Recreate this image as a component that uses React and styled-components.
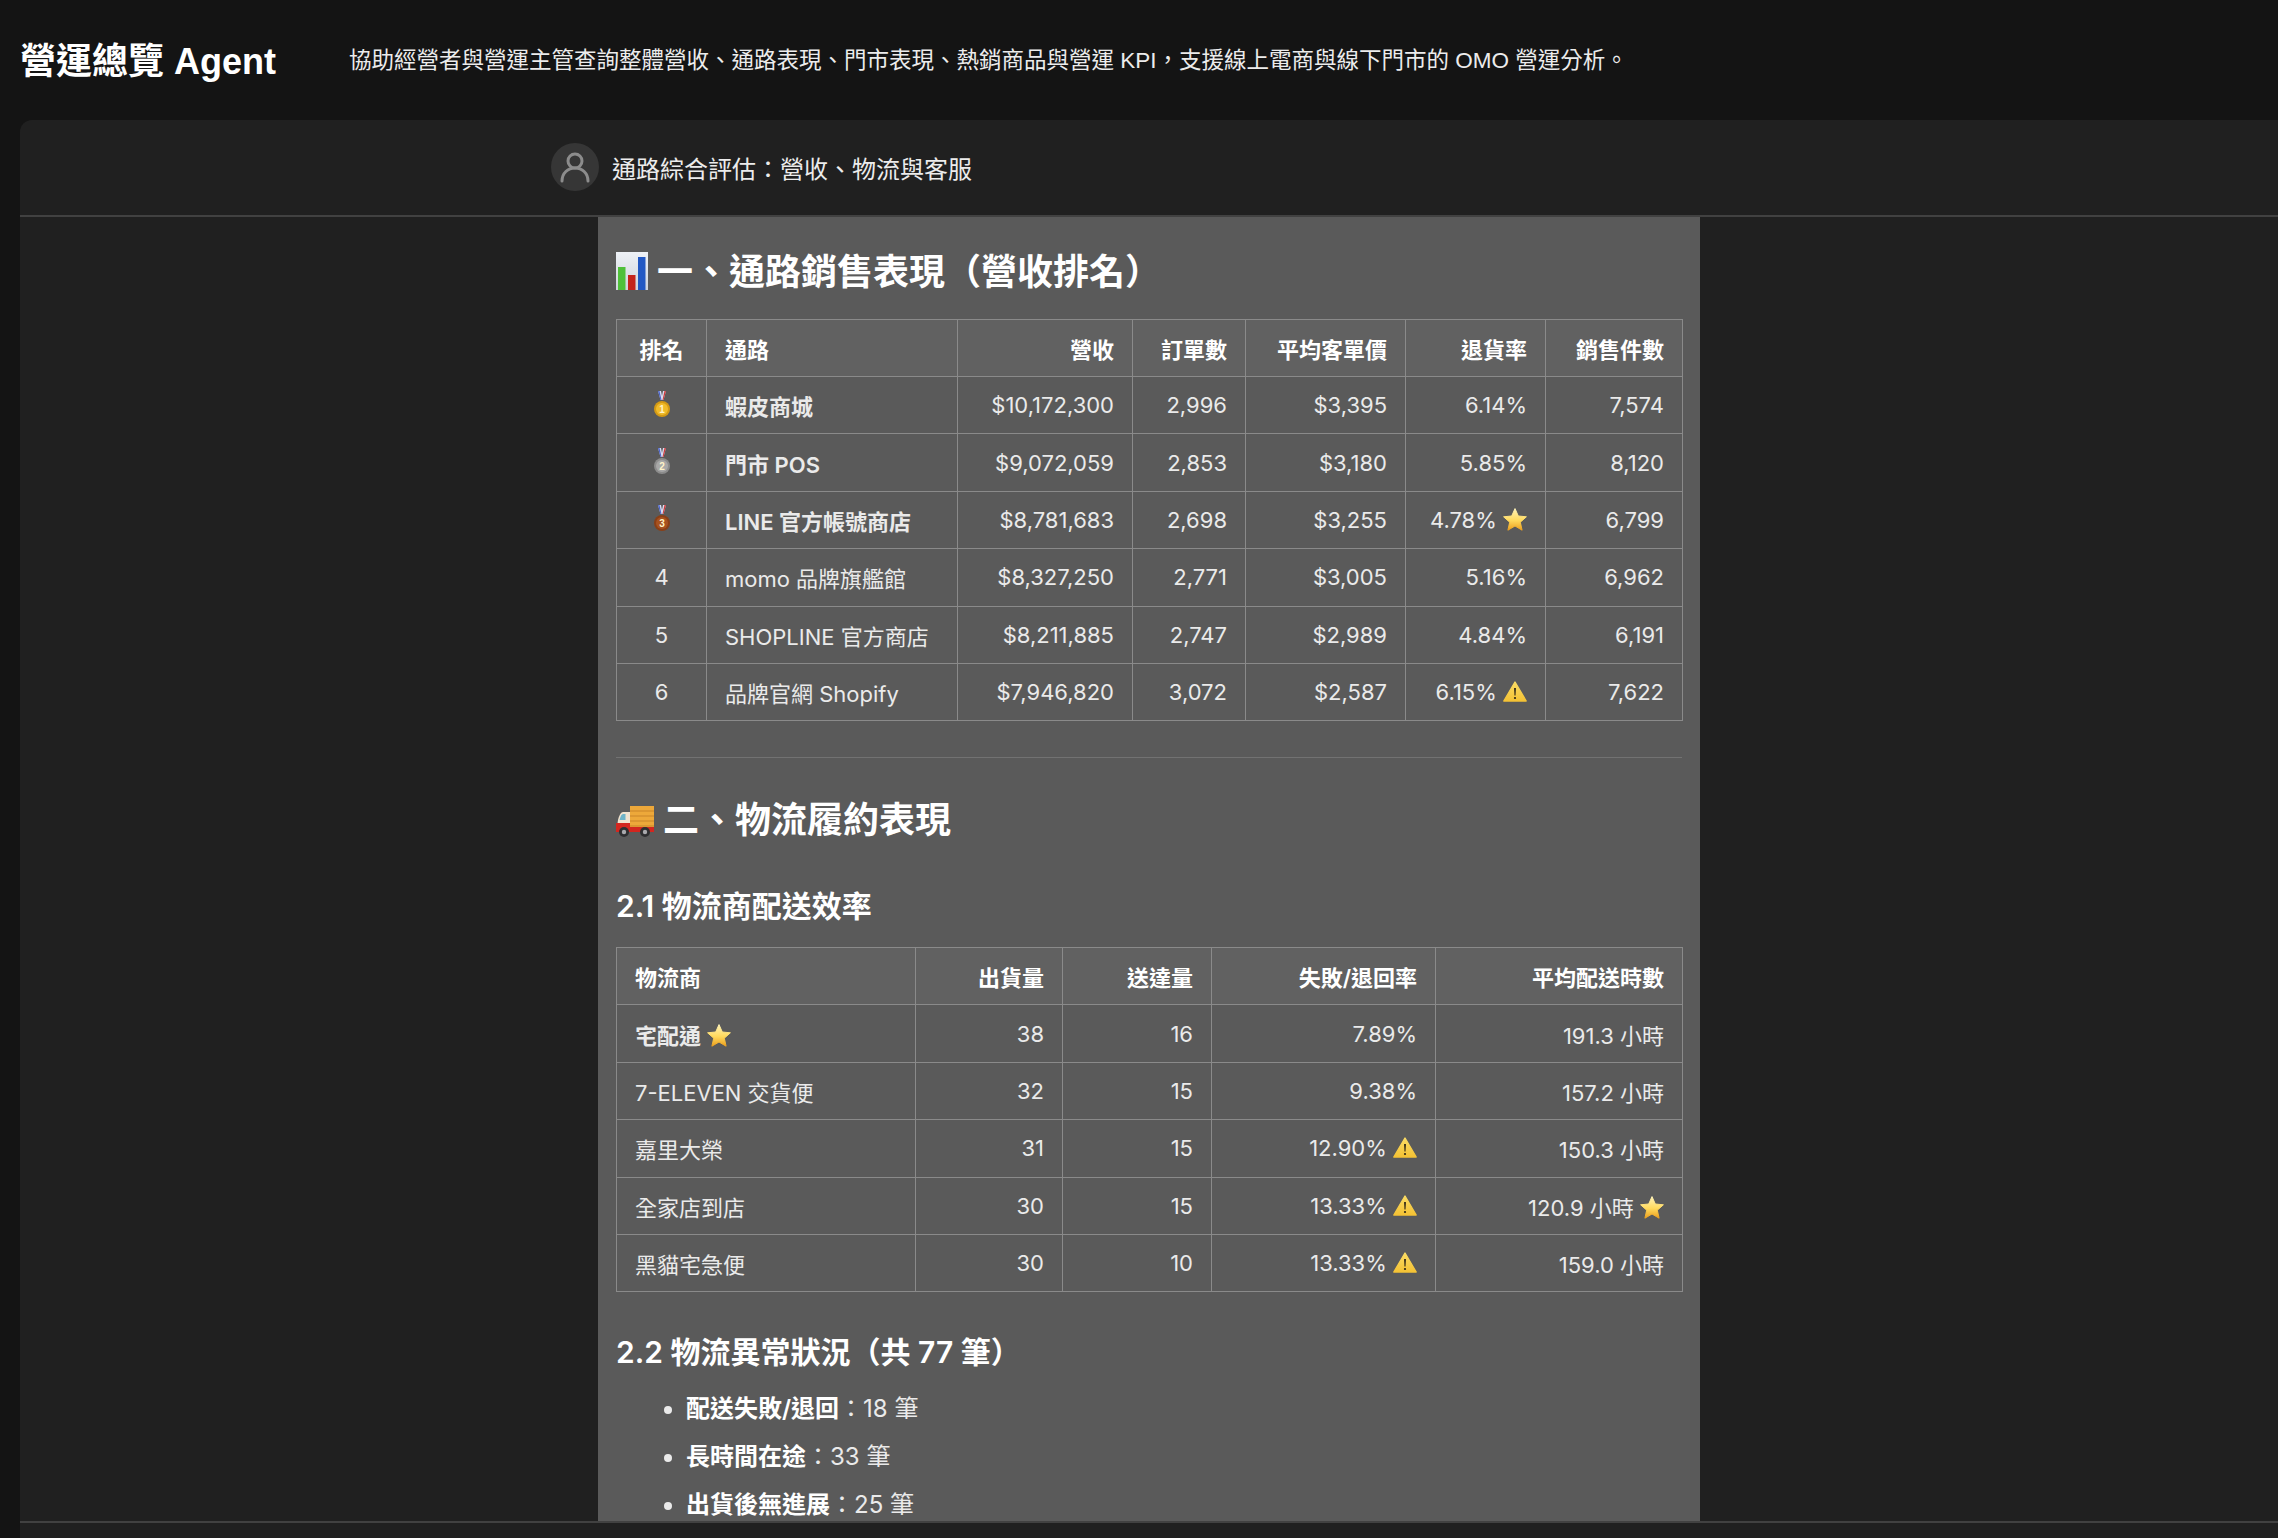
import React from 'react';
import styled, { createGlobalStyle } from 'styled-components';

const GlobalStyle = createGlobalStyle`
  html, body { margin: 0; padding: 0; background: #141414; }
  body {
    font-family: Inter, "Noto Sans CJK TC", sans-serif;
    color: #fff;
  }
`;

// --- emoji drawings (no colour emoji font in the sandbox) ---

const ChartIcon = () => (
  <EmojiSvg $w={32} $h={38} $mr={9} $shift={-5} viewBox="0 0 32 38">
    <defs>
      <linearGradient id="chartBg" x1="0" y1="0" x2="0" y2="1">
        <stop offset="0" stopColor="#eef1f6" />
        <stop offset="1" stopColor="#cfd4dc" />
      </linearGradient>
    </defs>
    <rect x="0" y="0" width="32" height="38" fill="url(#chartBg)" />
    <rect x="2" y="15" width="7.5" height="23" fill="#4fc03a" />
    <rect x="12" y="23" width="7.5" height="15" fill="#c5241c" />
    <rect x="22" y="5" width="7.5" height="33" fill="#2258c4" />
  </EmojiSvg>
);

const TruckIcon = () => (
  <EmojiSvg $w={38} $h={31} $mr={9} $shift={-4} viewBox="0 0 38 31">
    <rect x="14" y="0" width="24" height="23" fill="#eda83a" />
    <path d="M14 5h24M14 10h24M14 15h24M14 20h24" stroke="#c98428" strokeWidth="1" />
    <path d="M2 14 Q4 6 7 6 H14 V21 H1 Z" fill="#f1e3cf" />
    <path d="M3.5 14 Q5 8 7 8 H9.5 V14 Z" fill="#6fb4c8" />
    <path d="M0 17 H14 V21 H38 V26 H0 Z" fill="#d3261f" />
    <circle cx="8" cy="26" r="5" fill="#2e2e30" />
    <circle cx="8" cy="26" r="2.2" fill="#a9a9ad" />
    <circle cx="29" cy="26" r="5" fill="#2e2e30" />
    <circle cx="29" cy="26" r="2.2" fill="#a9a9ad" />
  </EmojiSvg>
);

const Medal = ({ face, edge, label }) => (
  <EmojiSvg $w={16} $h={26} viewBox="0 0 16 26">
    <path d="M4 0 H7 L8 5 L9 0 H12 L9.5 9 H6.5 Z" fill="#d8dcf0" />
    <path d="M4 0 H5.5 L7.5 9 H6.5 Z" fill="#4a63c8" />
    <path d="M10.5 0 H12 L9.5 9 H8.5 Z" fill="#cf3a3a" />
    <circle cx="8" cy="18" r="8" fill={edge} />
    <circle cx="8" cy="18" r="6" fill={face} />
    <MedalLabel x="8" y="21.5" textAnchor="middle">{label}</MedalLabel>
  </EmojiSvg>
);

const StarIcon = () => (
  <EmojiSvg $w={24} $h={23} $shift={-3} viewBox="0 0 24 23">
    <defs>
      <linearGradient id="starFill" x1="0" y1="0" x2="0" y2="1">
        <stop offset="0" stopColor="#fff3b8" />
        <stop offset="0.55" stopColor="#ffd95c" />
        <stop offset="1" stopColor="#eb9f1e" />
      </linearGradient>
    </defs>
    <path
      d="M12 .6 15.3 8l8.1.8-6.1 5.4 1.8 8-7.1-4.2-7.1 4.2 1.8-8L.6 8.8 8.7 8Z"
      fill="url(#starFill)"
      stroke="url(#starFill)"
      strokeLinejoin="round"
    />
  </EmojiSvg>
);

const WarnIcon = () => (
  <EmojiSvg $w={24} $h={21} $shift={-2} viewBox="0 0 24 21">
    <defs>
      <linearGradient id="warnFill" x1="0" y1="0" x2="0" y2="1">
        <stop offset="0" stopColor="#fbdc64" />
        <stop offset="1" stopColor="#f4c234" />
      </linearGradient>
    </defs>
    <path d="M12 1 23.2 20H.8Z" fill="url(#warnFill)" stroke="url(#warnFill)" strokeWidth="1.4" strokeLinejoin="round" />
    <path d="M11.1 7h1.8l-.4 7.6h-1Z" fill="#2b2314" />
    <circle cx="12" cy="17" r="1.1" fill="#2b2314" />
  </EmojiSvg>
);

// --- data ---

const gold = <Medal face="#f0bb2a" edge="#d49a14" label="1" />;
const silver = <Medal face="#a8a8a8" edge="#8c8c8c" label="2" />;
const bronze = <Medal face="#a8521f" edge="#8a3f16" label="3" />;

const channelCols = [90, 251, 175, 113, 160, 140, 137];
const channelHead = ['排名', '通路', '營收', '訂單數', '平均客單價', '退貨率', '銷售件數'];
const channels = [
  [gold, '蝦皮商城', '$10,172,300', '2,996', '$3,395', '6.14%', '7,574'],
  [silver, '門市 POS', '$9,072,059', '2,853', '$3,180', '5.85%', '8,120'],
  [bronze, 'LINE 官方帳號商店', '$8,781,683', '2,698', '$3,255', <>4.78% <StarIcon /></>, '6,799'],
  ['4', 'momo 品牌旗艦館', '$8,327,250', '2,771', '$3,005', '5.16%', '6,962'],
  ['5', 'SHOPLINE 官方商店', '$8,211,885', '2,747', '$2,989', '4.84%', '6,191'],
  ['6', '品牌官網 Shopify', '$7,946,820', '3,072', '$2,587', <>6.15% <WarnIcon /></>, '7,622'],
];

const carrierCols = [299, 147, 149, 224, 247];
const carrierHead = ['物流商', '出貨量', '送達量', '失敗/退回率', '平均配送時數'];
const carriers = [
  [<strong key="a">宅配通 <StarIcon /></strong>, '38', '16', '7.89%', '191.3 小時'],
  ['7-ELEVEN 交貨便', '32', '15', '9.38%', '157.2 小時'],
  ['嘉里大榮', '31', '15', <>12.90% <WarnIcon /></>, '150.3 小時'],
  ['全家店到店', '30', '15', <>13.33% <WarnIcon /></>, <>120.9 小時 <StarIcon /></>],
  ['黑貓宅急便', '30', '10', <>13.33% <WarnIcon /></>, '159.0 小時'],
];

const issues = [
  ['配送失敗/退回', '18 筆'],
  ['長時間在途', '33 筆'],
  ['出貨後無進展', '25 筆'],
];

const App = () => (
  <Page>
    <GlobalStyle />
    <Header>
      <Title>營運總覽 Agent</Title>
      <Description>
        協助經營者與營運主管查詢整體營收、通路表現、門市表現、熱銷商品與營運 KPI，支援線上電商與線下門市的 OMO 營運分析。
      </Description>
    </Header>
    <Panel>
      <UserBar>
        <Avatar>
          <svg width="34" height="34" viewBox="0 0 34 34" fill="none" stroke="#8c8c8c" strokeWidth="3">
            <circle cx="17" cy="11" r="7" />
            <path d="M4 31c0-8 6-13 13-13s13 5 13 13" strokeLinecap="round" />
          </svg>
        </Avatar>
        <UserText>通路綜合評估：營收、物流與客服</UserText>
      </UserBar>
      <ChatArea>
        <Message>
          <SectionTitle><ChartIcon />一、通路銷售表現（營收排名）</SectionTitle>
          <ReportTable>
            <colgroup>
              {channelCols.map((w, i) => <col key={i} width={w} />)}
            </colgroup>
            <thead>
              <tr>
                {channelHead.map((h, i) => (
                  <HeadCell key={h} $align={i === 0 ? 'center' : i === 1 ? 'left' : 'right'}>{h}</HeadCell>
                ))}
              </tr>
            </thead>
            <tbody>
              {channels.map((row, r) => (
                <tr key={r}>
                  {row.map((c, i) => (
                    <Cell key={i} $bold={i === 1 && r < 3} $align={i === 0 ? 'center' : i === 1 ? 'left' : 'right'}>{c}</Cell>
                  ))}
                </tr>
              ))}
            </tbody>
          </ReportTable>
          <Divider />
          <SectionTitle $tight><TruckIcon />二、物流履約表現</SectionTitle>
          <SubTitle>2.1 物流商配送效率</SubTitle>
          <ReportTable>
            <colgroup>
              {carrierCols.map((w, i) => <col key={i} width={w} />)}
            </colgroup>
            <thead>
              <tr>
                {carrierHead.map((h, i) => (
                  <HeadCell key={h} $align={i === 0 ? 'left' : 'right'}>{h}</HeadCell>
                ))}
              </tr>
            </thead>
            <tbody>
              {carriers.map((row, r) => (
                <tr key={r}>
                  {row.map((c, i) => (
                    <Cell key={i} $align={i === 0 ? 'left' : 'right'}>{c}</Cell>
                  ))}
                </tr>
              ))}
            </tbody>
          </ReportTable>
          <SubTitle $after>2.2 物流異常狀況（共 77 筆）</SubTitle>
          <IssueList>
            {issues.map(([name, count]) => (
              <li key={name}><strong>{name}</strong>：{count}</li>
            ))}
          </IssueList>
        </Message>
      </ChatArea>
      <PanelFooter />
    </Panel>
  </Page>
);

// --- STYLES ---

const Page = styled.div`
  width: 2278px;
  height: 1538px;
  display: flex;
  flex-direction: column;
  overflow: hidden;
  background: #141414;
`;

const Header = styled.header`
  flex: 0 0 120px;
  display: flex;
  align-items: center;
  padding: 0 0 4px 20px;
  box-sizing: border-box;
`;

const Title = styled.h1`
  margin: 0;
  width: 329px;
  font-size: 36px;
  font-weight: 600;
  font-family: "Liberation Sans", "Noto Sans CJK TC", sans-serif;
  color: #fff;
`;

const Description = styled.p`
  margin: 0;
  font-size: 22.5px;
  color: #ececec;
  font-family: "Liberation Sans", "Noto Sans CJK TC", sans-serif;
`;

const Panel = styled.main`
  flex: 1;
  min-height: 0;
  margin-left: 20px;
  display: flex;
  flex-direction: column;
  background: #202020;
  border-top-left-radius: 12px;
`;

const UserBar = styled.div`
  flex: 0 0 97px;
  box-sizing: border-box;
  display: flex;
  align-items: center;
  gap: 13px;
  padding: 0 0 1px 531px;
  border-bottom: 2px solid #414141;
`;

const Avatar = styled.div`
  width: 48px;
  height: 48px;
  border-radius: 50%;
  background: #363636;
  display: flex;
  align-items: center;
  justify-content: center;
`;

const UserText = styled.div`
  font-size: 24px;
  color: #ececec;
  font-family: "Liberation Sans", "Noto Sans CJK TC", sans-serif;
`;

const ChatArea = styled.div`
  flex: 1;
  min-height: 0;
  overflow: hidden;
  padding-left: 578px;
`;

const Message = styled.article`
  width: 1102px;
  min-height: 100%;
  box-sizing: border-box;
  padding: 30px 18px 0;
  background: #5a5a5a;
`;

const SectionTitle = styled.h2`
  margin: ${(p) => (p.$tight ? '0 0 40px' : '0 0 22px')};
  font-size: 36px;
  line-height: 50px;
  font-weight: 600;
  color: #fff;
`;

const SubTitle = styled.h3`
  margin: ${(p) => (p.$after ? '39px 0 12px' : '0 0 20px')};
  font-size: 30px;
  line-height: 42px;
  font-weight: 600;
  color: #fff;
`;

const ReportTable = styled.table`
  width: 100%;
  table-layout: fixed;
  border-collapse: collapse;
  font-size: 22px;
`;

const HeadCell = styled.th`
  height: 57px;
  padding: 0 18px;
  box-sizing: border-box;
  border: 1px solid #8a8a8a;
  background: #616161;
  color: #fff;
  font-weight: 600;
  text-align: ${(p) => p.$align};
`;

const Cell = styled.td`
  height: 57.4px;
  padding: 0 18px;
  box-sizing: border-box;
  border: 1px solid #8a8a8a;
  color: #eaeaea;
  font-weight: ${(p) => (p.$bold ? 600 : 400)};
  text-align: ${(p) => p.$align};
  white-space: nowrap;

  strong { font-weight: 600; }
`;

const Divider = styled.hr`
  margin: 36px 0 37px;
  border: 0;
  border-top: 1px solid #727272;
`;

const IssueList = styled.ul`
  margin: 0;
  padding-left: 70px;
  font-size: 24px;
  line-height: 48px;
  color: #eaeaea;

  strong { font-weight: 600; color: #fff; }
`;

const PanelFooter = styled.div`
  flex: 0 0 17px;
  box-sizing: border-box;
  border-top: 2px solid #414141;
`;

const EmojiSvg = styled.svg`
  display: inline-block;
  width: ${(p) => p.$w}px;
  height: ${(p) => p.$h}px;
  margin-right: ${(p) => p.$mr || 0}px;
  vertical-align: ${(p) => p.$shift || -2}px;
`;

const MedalLabel = styled.text`
  font-family: "Liberation Sans", sans-serif;
  font-size: 10px;
  font-weight: 700;
  fill: #fff3c8;
`;

export default App;
